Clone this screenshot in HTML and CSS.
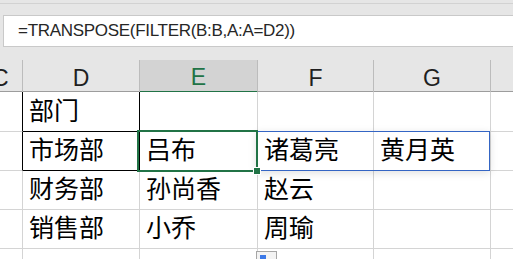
FILE: index.html
```html
<!DOCTYPE html>
<html lang="zh-CN">
<head>
<meta charset="utf-8">
<link rel="stylesheet" href="styles.css">
</head>
<body>
<div class="app">
  <div class="topstrip"></div>
  <div class="formula-row">
    <div class="formula-box">=TRANSPOSE(FILTER(B:B,A:A=D2))</div>
  </div>
  <div class="colhead">
    <div class="hcell hc"><span class="cut">C</span></div>
    <div class="hcell">D</div>
    <div class="hcell active">E</div>
    <div class="hcell">F</div>
    <div class="hcell">G</div>
    <div class="hcell last"></div>
  </div>
  <div class="sheet">
    <div class="cell edge-black"></div>
    <div class="cell boxed">部门</div>
    <div class="cell"></div>
    <div class="cell"></div>
    <div class="cell"></div>
    <div class="cell last"></div>

    <div class="cell edge-black"></div>
    <div class="cell boxed">市场部</div>
    <div class="cell">吕布</div>
    <div class="cell">诸葛亮</div>
    <div class="cell">黄月英</div>
    <div class="cell last"></div>

    <div class="cell"></div>
    <div class="cell">财务部</div>
    <div class="cell">孙尚香</div>
    <div class="cell">赵云</div>
    <div class="cell"></div>
    <div class="cell last"></div>

    <div class="cell"></div>
    <div class="cell">销售部</div>
    <div class="cell">小乔</div>
    <div class="cell">周瑜</div>
    <div class="cell"></div>
    <div class="cell last"></div>

    <div class="cell"></div>
    <div class="cell"></div>
    <div class="cell"></div>
    <div class="cell"></div>
    <div class="cell"></div>
    <div class="cell last"></div>

    <div class="spill"></div>
    <div class="selection"><span class="handle"></span></div>
    <div class="paste-icon"><span class="paste-blue"></span></div>
  </div>
</div>
</body>
</html>
```

FILE: styles.css
```css
html, body {
  margin: 0;
  padding: 0;
}
body {
  width: 513px;
  height: 259px;
  overflow: hidden;
  background: #e6e6e6;
}
.app {
  width: 513px;
  height: 259px;
  overflow: hidden;
  background: #e6e6e6;
}
.topstrip {
  height: 3px;
  border-bottom: 1px solid #d2d2d2;
  margin-bottom: 11px;
}
.formula-row {
  padding-left: 3px;
  height: 32px;
}
.formula-box {
  box-sizing: border-box;
  height: 32px;
  background: #ffffff;
  border: 1px solid #c9c9c9;
  border-right: none;
  padding-left: 14px;
  font-family: "Liberation Sans", Arial, sans-serif;
  font-size: 17px;
  letter-spacing: -0.3px;
  line-height: 30px;
  color: #262626;
}
.colhead {
  margin-top: 13px;
  display: grid;
  grid-template-columns: 23px 117px 118px 116px 117px 22px;
  height: 32px;
  border-bottom: 1px solid #9d9d9d;
  box-sizing: border-box;
}
.hcell {
  box-sizing: border-box;
  border-right: 1px solid #bcbcbc;
  display: flex;
  align-items: center;
  justify-content: center;
  font-family: "Liberation Sans", Arial, sans-serif;
  font-size: 23px;
  color: #1f1f1f;
  padding-top: 4px;
}
.hcell.hc {
  justify-content: flex-start;
  overflow: hidden;
}
.hcell .cut {
  margin-left: -8px;
}
.hcell.active {
  background: #d3d3d3;
  color: #217346;
  border-bottom: 2px solid #217346;
  margin-bottom: -1px;
}
.hcell.last {
  border-right: none;
}
.sheet {
  position: relative;
  display: grid;
  grid-template-columns: 23px 117px 118px 116px 117px 22px;
  grid-template-rows: 40px 39px 39px 39px 39px;
  background: #ffffff;
}
.cell {
  box-sizing: border-box;
  border-right: 1px solid #d4d4d4;
  border-bottom: 1px solid #d4d4d4;
  font-family: "Noto Sans CJK SC", "Noto Sans", sans-serif;
  font-size: 25px;
  color: #000000;
  padding-left: 6px;
  padding-bottom: 4px;
  display: flex;
  align-items: flex-end;
  line-height: 36px;
  white-space: nowrap;
}
.cell.last {
  border-right: none;
}
.cell.edge-black {
  border-right-color: #000000;
}
.cell.boxed {
  border-right-color: #000000;
  border-bottom-color: #000000;
}
.spill {
  position: absolute;
  left: 256px;
  top: 39px;
  width: 234px;
  height: 40px;
  box-sizing: border-box;
  border: 1px solid #3465c4;
  box-shadow: 0 2px 8px rgba(0, 0, 0, 0.12);
}
.selection {
  position: absolute;
  left: 137px;
  top: 38px;
  width: 121px;
  height: 42px;
  box-sizing: border-box;
  border: 2px solid #217346;
}
.handle {
  position: absolute;
  right: -4px;
  bottom: -4px;
  width: 6px;
  height: 6px;
  background: #217346;
  border: 1px solid #ffffff;
  box-sizing: content-box;
  margin: -1px;
}
.paste-icon {
  position: absolute;
  left: 256px;
  top: 159px;
  width: 21px;
  height: 16px;
  box-sizing: border-box;
  border: 1px solid #a6a6a6;
  background: #f3f3f3;
}
.paste-blue {
  position: absolute;
  left: 3px;
  top: 3px;
  width: 6px;
  height: 8px;
  background: #3b78e7;
}
```
